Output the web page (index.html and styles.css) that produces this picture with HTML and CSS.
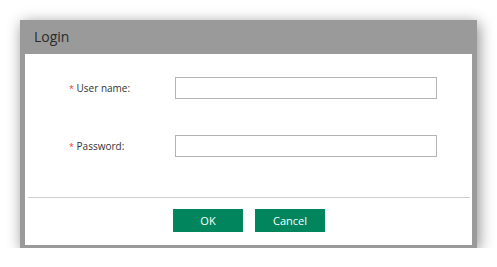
FILE: index.html
```html
<!DOCTYPE html>
<html lang="en">
<head>
    <meta charset="UTF-8">
    <title>Login</title>
    <link rel="stylesheet" href="styles.css">
</head>
<body>
    <div class="dialog">
        <div class="dialog-title">Login</div>
        <div class="dialog-body">
            <form class="login-form">
                <div class="form-row">
                    <label for="username"><span class="req">*</span> User name:</label>
                    <input type="text" id="username" name="username">
                </div>
                <div class="form-row">
                    <label for="password"><span class="req">*</span> Password:</label>
                    <input type="password" id="password" name="password">
                </div>
            </form>
            <div class="dialog-footer">
                <button type="button" class="btn">OK</button>
                <button type="button" class="btn">Cancel</button>
            </div>
        </div>
    </div>
</body>
</html>
```

FILE: styles.css
```css
* {
    margin: 0;
    padding: 0;
    box-sizing: border-box;
}

body {
    font-family: 'Open Sans', 'Noto Sans', sans-serif;
    background: white;
    padding: 20px 0 0 20px;
}

.dialog {
    width: 457px;
    background: #9a9a9a;
    padding: 0 5px 3px 5px;
    box-shadow: 2px 3px 14px rgba(0, 0, 0, 0.45);
}

.dialog-title {
    height: 34px;
    line-height: 34px;
    padding-left: 9px;
    font-size: 14px;
    color: #2b2b2b;
}

.dialog-body {
    background: white;
    padding-top: 23px;
}

.login-form {
    height: 120px;
    display: flex;
    flex-direction: column;
    gap: 36px;
}

.form-row {
    display: flex;
    align-items: center;
    height: 22px;
}

.form-row label {
    width: 150px;
    padding-left: 44px;
    font-size: 10px;
    color: #333;
}

.req {
    color: #e5403a;
    font-size: 9px;
}

.form-row input {
    width: 262px;
    height: 22px;
    border: 1px solid #b3b3b3;
    background: white;
    outline: none;
}

.dialog-footer {
    margin: 0 2px 0 3px;
    border-top: 1px solid #cfcfcf;
    padding: 11px 0 13px;
    display: flex;
    justify-content: center;
    gap: 12px;
}

.btn {
    width: 70px;
    height: 23px;
    border: none;
    background: #00855d;
    color: white;
    font-family: inherit;
    font-size: 11px;
    cursor: pointer;
}
```
